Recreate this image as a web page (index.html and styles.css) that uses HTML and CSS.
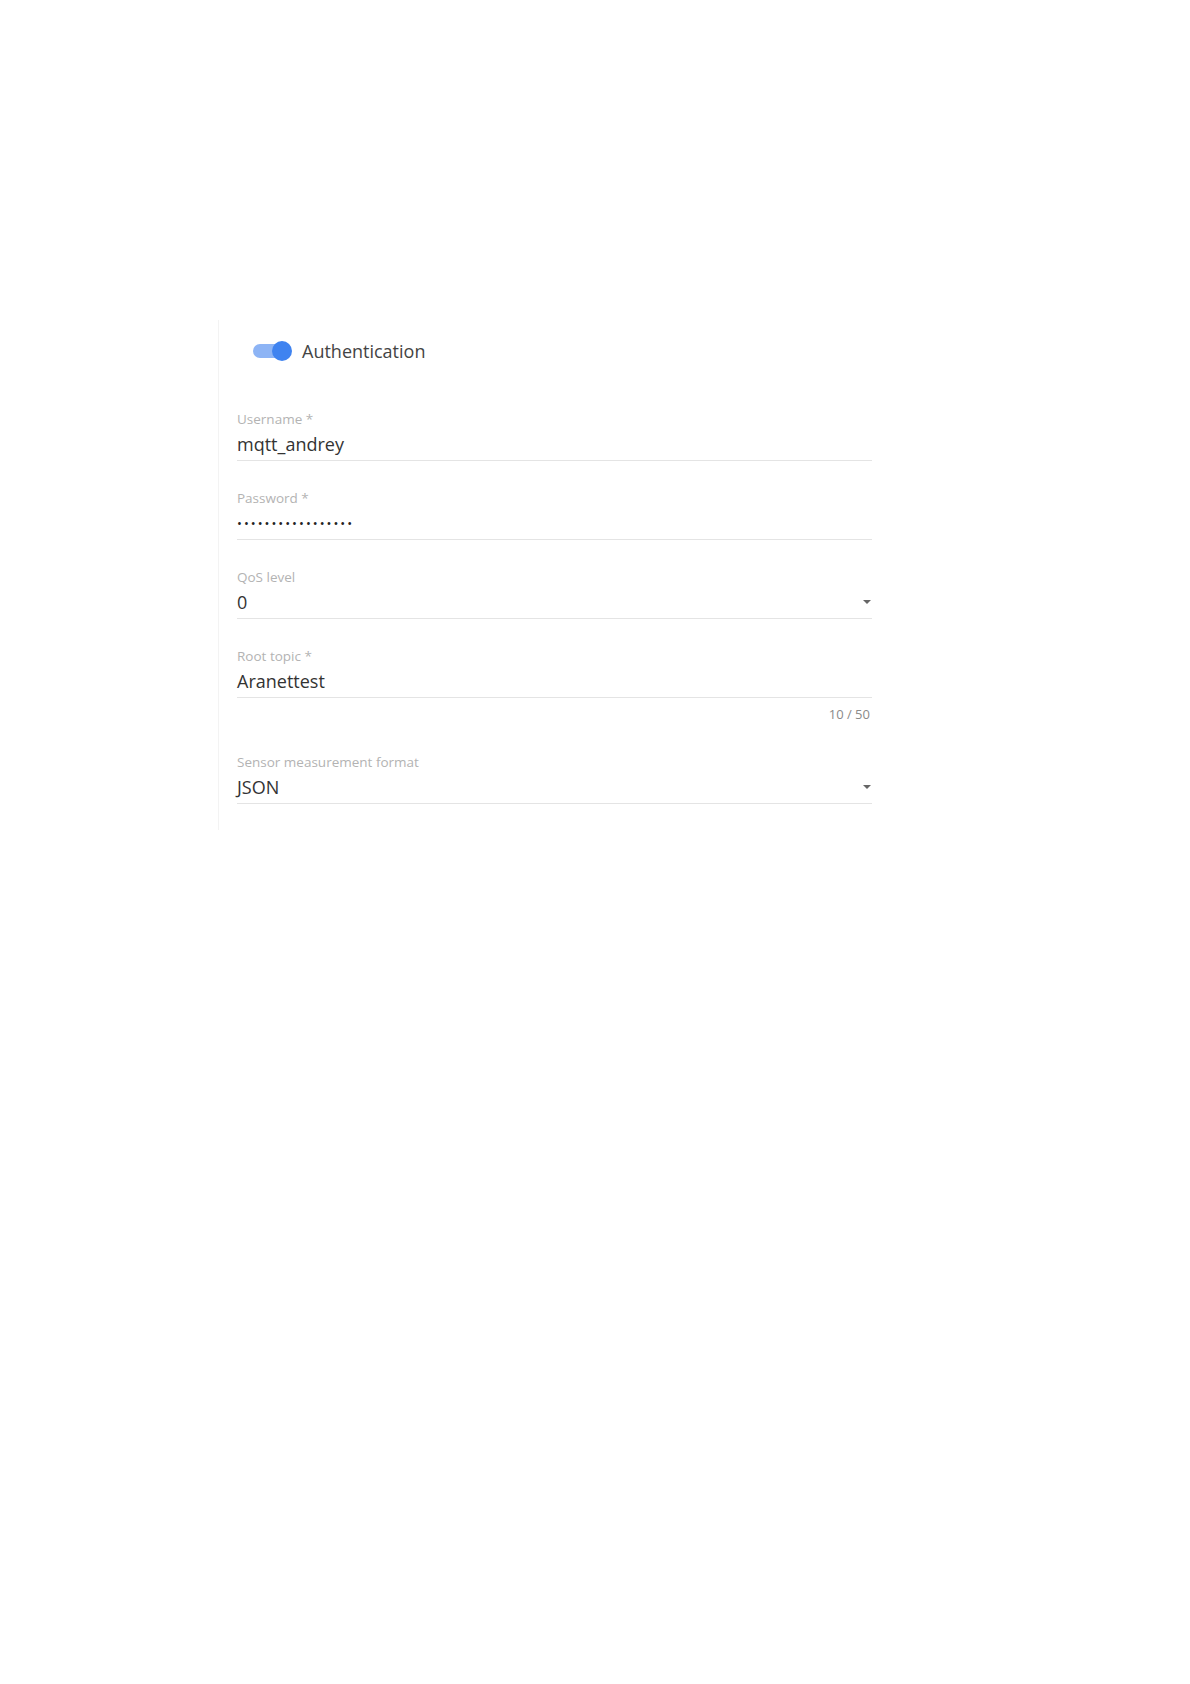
FILE: index.html
```html
<!DOCTYPE html>
<html lang="en">
<head>
    <meta charset="UTF-8">
    <meta name="viewport" content="width=device-width, initial-scale=1.0">
    <title>MQTT settings</title>
    <link rel="stylesheet" href="styles.css">
</head>
<body>

    <div id="panel">
        <div class="toggle-row">
            <span class="switch">
                <span class="switch-track"></span>
                <span class="switch-thumb"></span>
            </span>
            <span class="toggle-label">Authentication</span>
        </div>

        <div class="field first">
            <div class="field-label">Username *</div>
            <div class="field-value">mqtt_andrey</div>
        </div>

        <div class="field">
            <div class="field-label">Password *</div>
            <div class="field-value dots">•••••••••••••••••</div>
        </div>

        <div class="field">
            <div class="field-label">QoS level</div>
            <div class="field-value select">
                <span>0</span>
                <span class="arrow"></span>
            </div>
        </div>

        <div class="field">
            <div class="field-label">Root topic *</div>
            <div class="field-value">Aranettest</div>
        </div>
        <div class="counter">10 / 50</div>

        <div class="field last">
            <div class="field-label">Sensor measurement format</div>
            <div class="field-value select">
                <span>JSON</span>
                <span class="arrow"></span>
            </div>
        </div>
    </div>

</body>
</html>
```

FILE: styles.css
```css
body {
    font-family: 'Open Sans', 'Liberation Sans', Arial, sans-serif;
    margin: 0;
    padding: 0;
    background-color: #fff;
    color: #3a3a3a;
}

#panel {
    width: 635px;
    margin-top: 320px;
    margin-left: 218px;
    padding: 14px 0 26px 18px;
    border-left: 1px solid #f3f3f3;
}

.toggle-row {
    display: flex;
    align-items: center;
    height: 34px;
    padding-left: 16px;
}

.switch {
    position: relative;
    width: 39px;
    height: 20px;
    margin-right: 10px;
}

.switch-track {
    display: block;
    width: 36px;
    height: 14px;
    margin-top: 3px;
    border-radius: 7px;
    background-color: #8db4f5;
}

.switch-thumb {
    position: absolute;
    top: 0;
    right: 0;
    width: 20px;
    height: 20px;
    border-radius: 50%;
    background-color: #3f83f0;
}

.toggle-label {
    font-size: 18px;
    color: #444;
}

.field {
    margin-top: 28px;
    border-bottom: 1px solid #e4e4e4;
    padding-bottom: 2px;
}

.field.first {
    margin-top: 42px;
}

.field.last {
    margin-top: 31px;
}

.field-label {
    font-size: 13.5px;
    line-height: 18px;
    color: #b3b3b3;
}

.field-value {
    font-size: 18px;
    line-height: 28px;
    padding-top: 2px;
    color: #333;
}

.dots {
    font-size: 13px;
    letter-spacing: 2px;
    color: #222;
}

.select {
    display: flex;
    justify-content: space-between;
    align-items: center;
}

.arrow {
    width: 0;
    height: 0;
    border-left: 4px solid transparent;
    border-right: 4px solid transparent;
    border-top: 4px solid #666;
    margin-right: 1px;
}

.counter {
    text-align: right;
    font-size: 13px;
    line-height: 16px;
    margin-top: 8px;
    padding-right: 2px;
    color: #8a8a8a;
}
```
